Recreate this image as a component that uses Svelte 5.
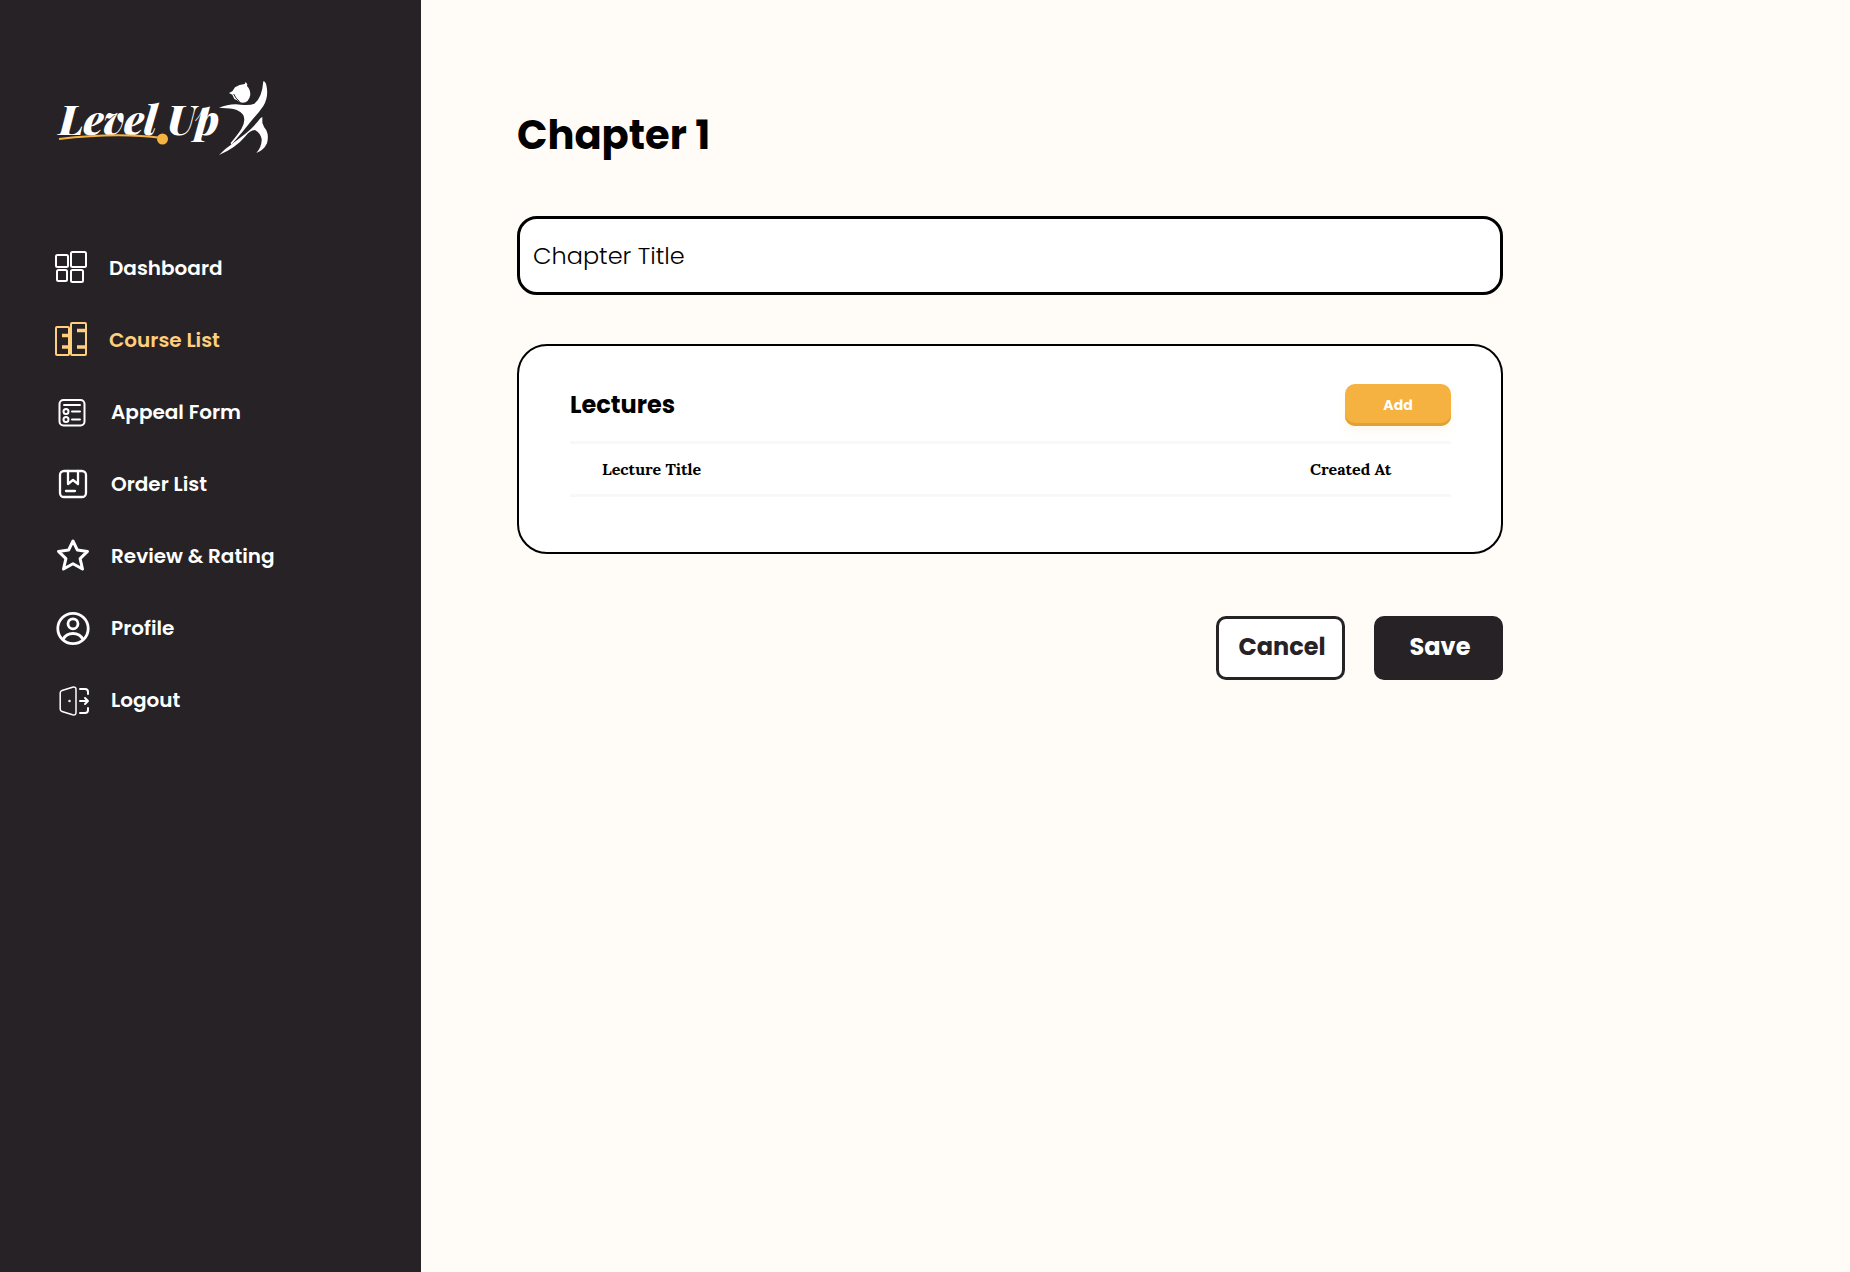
<script>
  const items = [
    { label: 'Dashboard', icon: 'dashboard', size: 34 },
    { label: 'Course List', icon: 'courses', size: 34, active: true },
    { label: 'Appeal Form', icon: 'form', size: 36 },
    { label: 'Order List', icon: 'order', size: 36 },
    { label: 'Review & Rating', icon: 'star', size: 36 },
    { label: 'Profile', icon: 'profile', size: 36 },
    { label: 'Logout', icon: 'logout', size: 36 }
  ];

  let chapterTitle = $state('');
</script>

<div class="layout">
  <aside class="sidebar">
    <a class="brand" href="#home" aria-label="Level Up">
      <svg class="logo" width="220" height="82" viewBox="55 76 220 82">
        <text class="wordmark" x="59" y="135">Level</text>
        <text class="wordmark" x="167" y="135">Up</text>
        <path d="M59 139 Q118 132 162 138" fill="none" stroke="#f5b240" stroke-width="2" />
        <circle cx="162.500" cy="139" r="5.500" fill="#f5b240" />
        <g transform="translate(200 70) scale(.33333)" fill="#fff">
          <path d="M87 69 L97 64 L105 52 Q118 43 134 42 L137 36 L142 43 L141 48 Q151 58 151 74 Q147 97 128 98 Q118 98 110 90 L103 87 L97 74 Z" />
          <path d="M101 72 Q107 86 119 95" fill="none" stroke="#272226" stroke-width="3" />
          <path d="M57 114 Q88 100 122 104 Q150 107 163 101 Q186 85 190 34 Q193 32 198 41 Q208 78 190 108 Q178 126 158 148 Q130 184 94 224 L92 219 Q113 194 124 177 Q138 153 130 136 Q118 112 57 114 Z" />
          <path d="M57 255 Q73 237 97 221 L138 190 Q164 168 181 145 L187 141 L187 158 Q190 169 199 181 Q207 198 201 220 Q191 242 169 249 Q186 230 185 207 Q182 190 165 180 Q149 181 137 198 Q107 234 57 255 Z" />
        </g>
      </svg>
    </a>
    <nav aria-label="Main">
      <ul>
        {#each items as item}
          <li>
            <a class="link" class:active={item.active} href={'#' + item.icon} aria-current={item.active ? 'page' : undefined}>
              <svg width={item.size} height="36" viewBox="0 0 {item.size} 36" fill="none" stroke="currentColor" stroke-width="2" stroke-linecap="round" stroke-linejoin="round" aria-hidden="true">
                {#if item.icon === 'dashboard'}
                  <rect x="1" y="5" width="12" height="12" rx="1.500" />
                  <rect x="16" y="2" width="15" height="15" rx="1.500" />
                  <rect x="2" y="20" width="10" height="11" rx="1.500" />
                  <rect x="16" y="20" width="12" height="12" rx="1.500" />
                {:else if item.icon === 'courses'}
                  <rect x="1" y="5" width="13" height="28" rx="1" />
                  <rect x="16" y="1" width="15" height="32" rx="1" />
                  <path d="M7 13.500h7M7 25h7M22 8.500h9M22 25h9" stroke-width="3.500" stroke-linecap="butt" />
                {:else if item.icon === 'form'}
                  <rect x="4.500" y="6" width="25" height="25.500" rx="4" />
                  <path d="M9 11h16M17 17.500h8M17 25.500h8" />
                  <circle cx="11" cy="17.500" r="2.500" />
                  <circle cx="11" cy="25.500" r="2.500" />
                {:else if item.icon === 'order'}
                  <rect x="5" y="5" width="26" height="26" rx="4" stroke-width="2.300" />
                  <path stroke-width="2.300" d="M13 5v13l5-4 5 4V5M11 25h9" />
                {:else if item.icon === 'star'}
                  <path stroke-width="3" d="M18 3l4.400 9.100L32.500 13.400l-7.400 7.200L27.500 31 18 25.800 8.500 31l2.400-10.400L3.500 13.400l10.100-1.300z" />
                {:else if item.icon === 'profile'}
                  <g stroke-width="2.800">
                    <circle cx="18" cy="18.500" r="15.200" />
                    <circle cx="18" cy="13.800" r="5" />
                    <path d="M8 29.500q3-6 10-6t10 6" />
                  </g>
                {:else}
                  <g stroke-width="1.500">
                    <path d="M7 8.500l10.500-3.300q3.500-.7 3.500 2.300v23q0 3-3.500 2.300L7 29.500q-1.800-.6-1.800-2.500V11Q5.200 9 7 8.500z" />
                    <path stroke-width="2" d="M25 7h5q3 0 3 3v2M25 31h5q3 0 3-3v-2M25 19h8M30 16l3 3-3 3" />
                    <circle cx="14.500" cy="19" r=".5" />
                  </g>
                {/if}
              </svg>
              <span>{item.label}</span>
            </a>
          </li>
        {/each}
      </ul>
    </nav>
  </aside>

  <main>
    <form class="content" onsubmit={(e) => e.preventDefault()}>
      <h1>Chapter 1</h1>
      <input class="title-field" type="text" placeholder="Chapter Title" aria-label="Chapter Title" bind:value={chapterTitle} />

      <section class="card" aria-labelledby="lectures-heading">
        <header class="card-head">
          <h2 id="lectures-heading">Lectures</h2>
          <button class="add" type="button">Add</button>
        </header>
        <table>
          <thead>
            <tr>
              <th class="lecture" scope="col">Lecture Title</th>
              <th class="created" scope="col">Created At</th>
            </tr>
          </thead>
        </table>
      </section>

      <div class="actions">
        <button class="cancel" type="button">Cancel</button>
        <button class="save" type="submit">Save</button>
      </div>
    </form>
  </main>
</div>

<style>
  :global(body) {
    margin: 0;
    background: #fffbf6;
  }

  .layout {
    display: flex;
    min-height: 100vh;
    font-family: Poppins, Inter, sans-serif;
    color: #000;
  }

  .layout,
  .layout * {
    box-sizing: border-box;
  }

  .sidebar {
    flex: 0 0 421px;
    padding: 76px 55px;
    background: #272226;
  }

  .brand,
  .logo {
    display: block;
  }

  .wordmark {
    font: italic 900 40px 'Playfair Display', 'Liberation Serif', serif;
    fill: #fff;
  }

  ul {
    display: flex;
    flex-direction: column;
    gap: 36px;
    margin: 92px 0 0;
    padding: 0;
    list-style: none;
  }

  .link {
    display: flex;
    align-items: center;
    gap: 20px;
    color: #fff;
    font-size: 20px;
    font-weight: 600;
    line-height: 36px;
    text-decoration: none;
    white-space: nowrap;
  }

  .link.active {
    color: #ffcf7d;
  }

  main {
    flex: 1;
    min-width: 0;
    padding: 105px 96px;
  }

  .content {
    max-width: 986px;
  }

  h1 {
    margin: 0 0 51px;
    font-size: 40px;
    font-weight: 700;
    line-height: 60px;
  }

  .title-field {
    display: block;
    width: 100%;
    height: 79px;
    padding: 0 13px;
    border: 3px solid #000;
    border-radius: 20px;
    background: #fff;
    color: #000;
    font: 300 24px Poppins, Inter, sans-serif;
  }

  .title-field::placeholder {
    color: #000;
    opacity: 1;
  }

  .card {
    margin-top: 49px;
    padding: 38px 50px 55px 51px;
    border: 2px solid #000;
    border-radius: 30px;
    background: #fff;
  }

  .card-head {
    display: flex;
    align-items: center;
    justify-content: space-between;
    margin-bottom: 15px;
  }

  h2 {
    margin: 0;
    font-size: 24px;
    font-weight: 700;
    line-height: 36px;
  }

  button {
    border: 0;
    border-radius: 10px;
    font-family: inherit;
    font-weight: 700;
    cursor: pointer;
  }

  .add {
    width: 106px;
    height: 42px;
    background: #f5b240;
    box-shadow: inset 0 -3px #e0a236, 0 6px 10px #f5b24014;
    color: #fff;
    font-size: 14px;
  }

  table {
    width: 100%;
    border-collapse: separate;
    border-spacing: 0;
    table-layout: fixed;
  }

  th {
    height: 56px;
    padding: 0 32px;
    border: solid #f8f8f8;
    border-width: 3px 0;
    font: 700 16px Lora, 'Liberation Serif', serif;
    text-align: left;
  }

  .created {
    width: 173px;
  }

  .actions {
    display: flex;
    justify-content: flex-end;
    gap: 29px;
    margin-top: 62px;
  }

  .actions button {
    width: 129px;
    height: 64px;
    padding: 0 0 4px 3px;
    border: 3px solid #272226;
    font-size: 24px;
  }

  .cancel {
    background: #fff;
    color: #272226;
  }

  .save {
    background: #272226;
    color: #fff;
  }
</style>
